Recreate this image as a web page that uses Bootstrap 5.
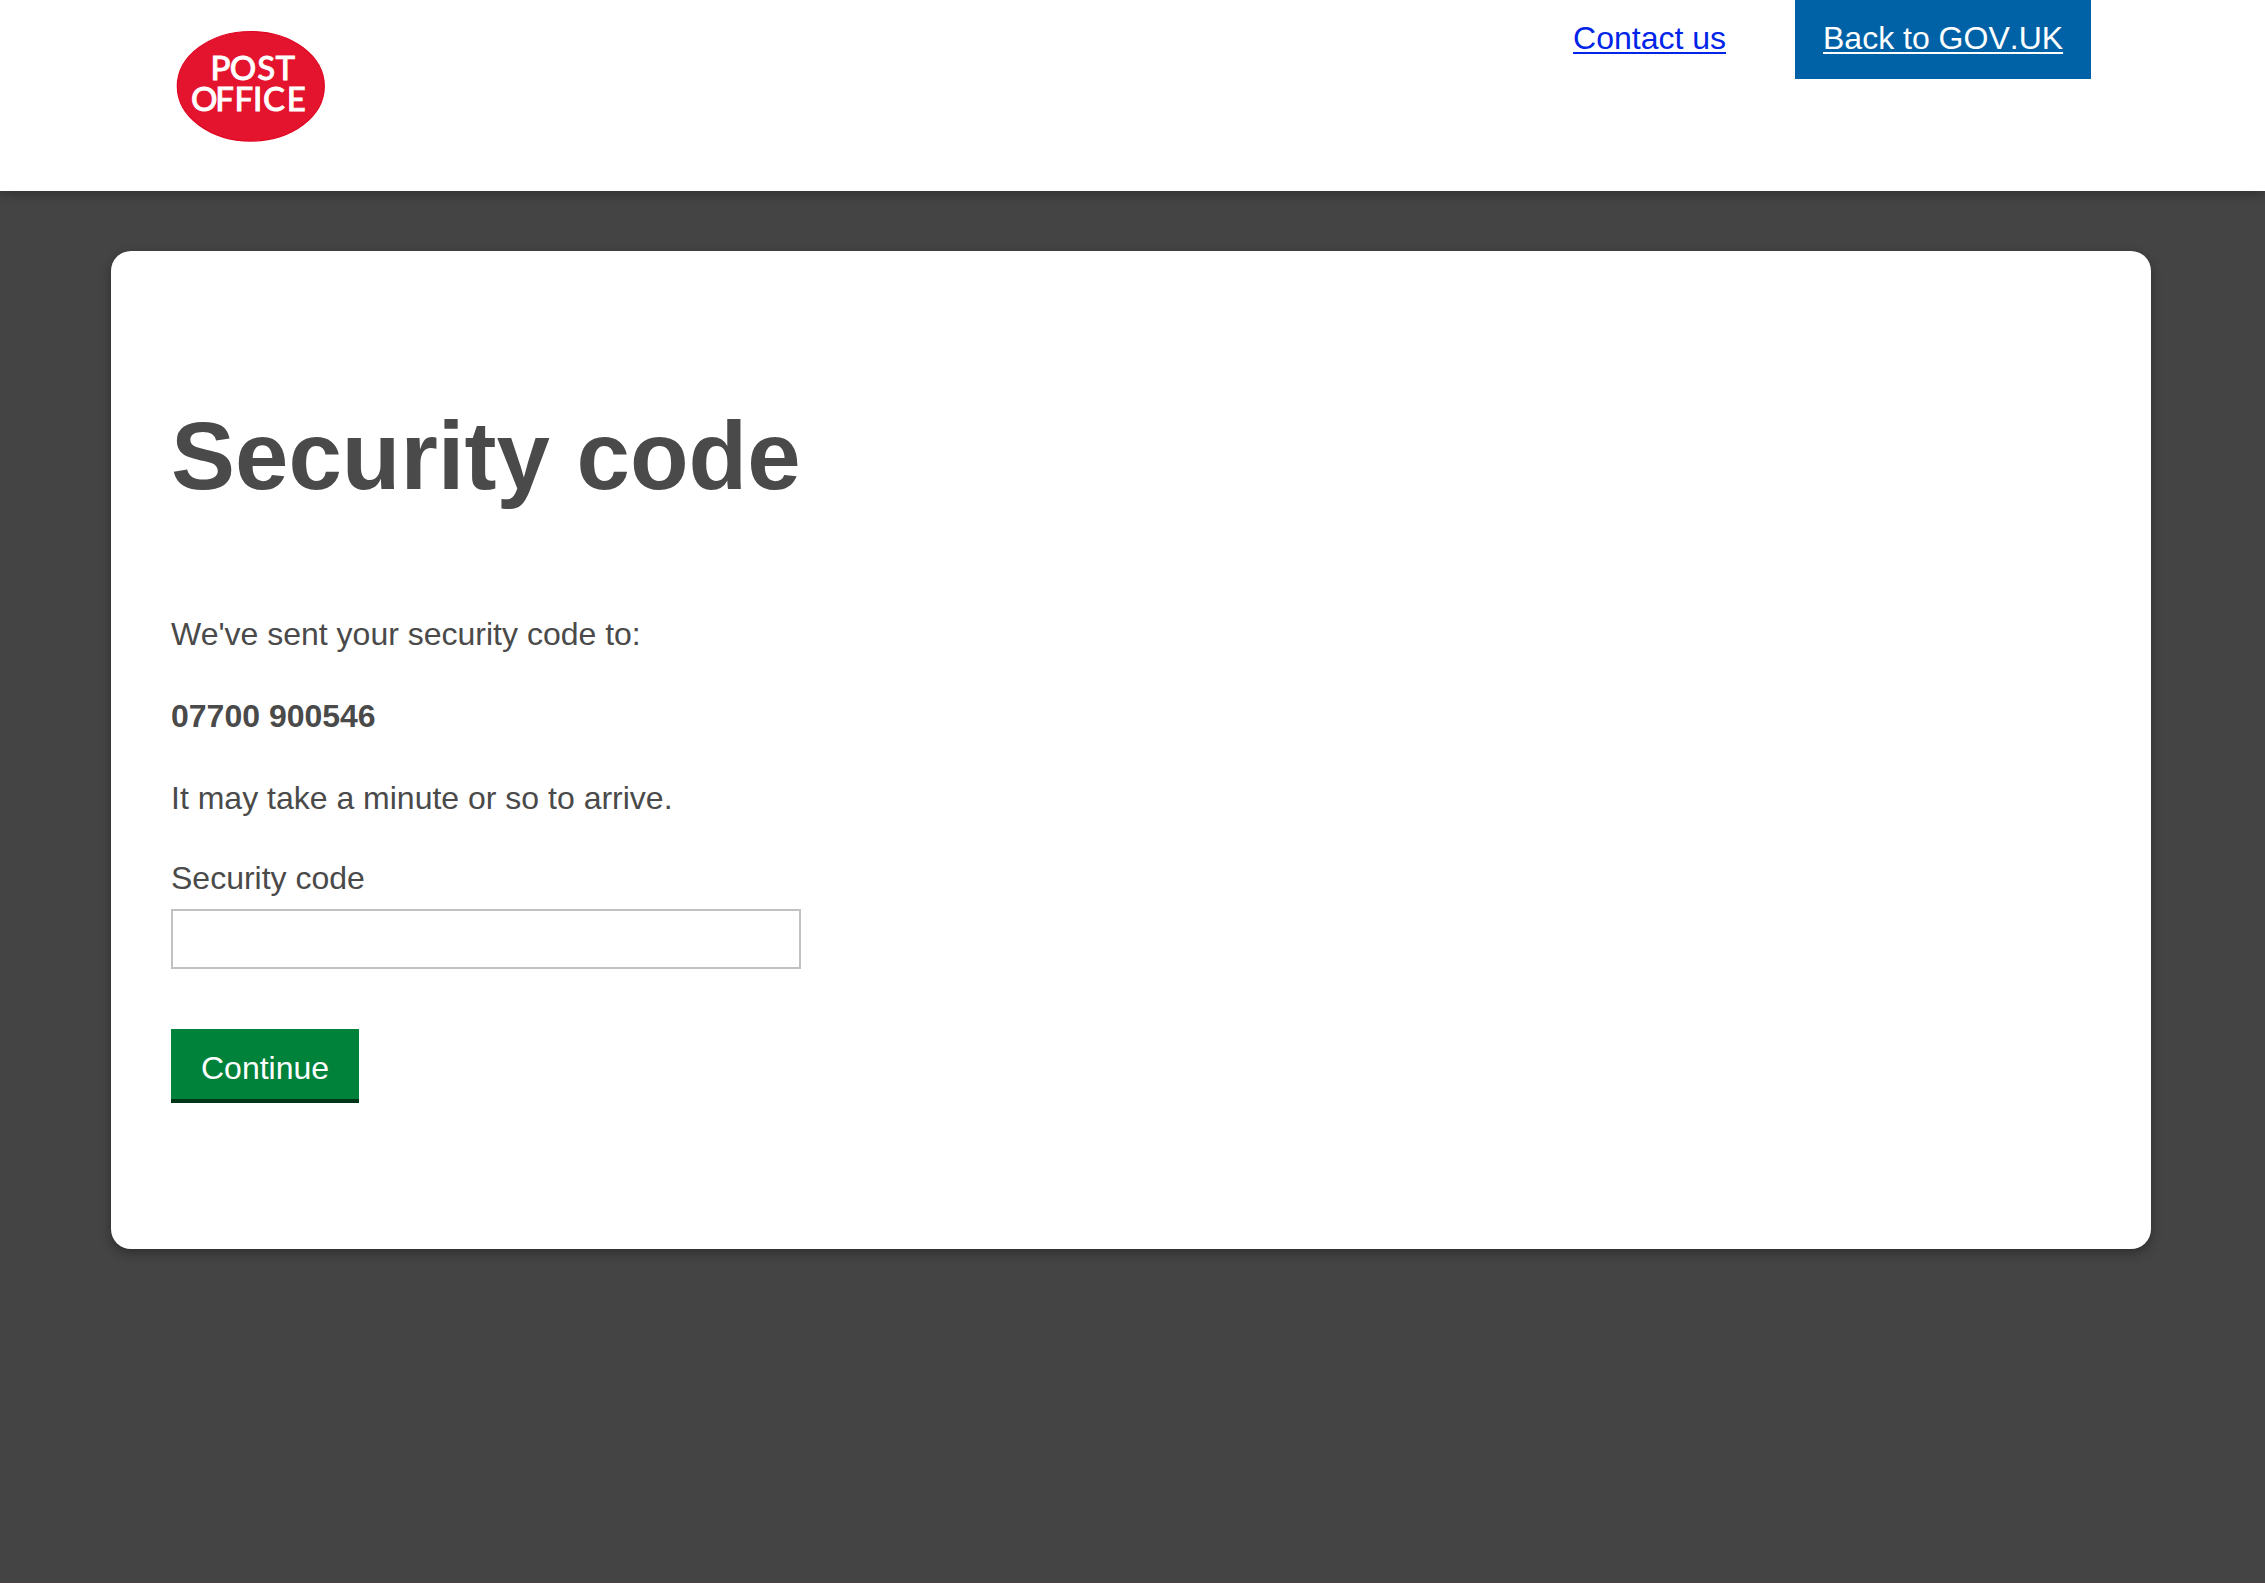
<!DOCTYPE html>
<html lang="en">
<head>
<meta charset="utf-8">
<meta name="viewport" content="width=device-width, initial-scale=1">
<title>Security code</title>
<link href="https://cdn.jsdelivr.net/npm/bootstrap@5.3.0/dist/css/bootstrap.min.css" rel="stylesheet">
<style>
body{background:#444;color:#4a4a4a;font:32px/40px "Liberation Sans",Arial,sans-serif;min-height:100vh;border-bottom:1px solid #494145}
.site-head{height:191px;padding:0 174px 0 171px;background:#fff;box-shadow:0 2px 12px rgba(0,0,0,.32)}
.site-logo{margin:25px 0 0;width:160px;height:123px}
.head-link{padding:18px 28px 21px;text-decoration-thickness:2px;text-underline-offset:3px;font-kerning:none}
.contact{color:#0024e8;margin-right:41px}
.gov{background:#0062a6;color:#fff;width:296px;white-space:nowrap}
.panel{margin:60px 114px 0 111px;height:998px;border-radius:20px;padding:155px 60px 0;box-shadow:0 4px 12px rgba(0,0,0,.32)}
h1{font-size:96px;line-height:100px;font-weight:700;margin-bottom:108px}
.panel p{margin-bottom:42px}
.panel p.last-note{margin-bottom:40px}
.code-field{width:630px}
.code-field label{margin-bottom:11px}
.code-field input{height:60px;border:2px solid #bfc1c3}
.go{margin-top:60px;padding:19px 30px 11px;border:0;border-bottom:4px solid #003618;background:#00823b;color:#fff;font-size:32px;line-height:40px}
</style>
<script src="https://cdn.jsdelivr.net/npm/bootstrap@5.3.0/dist/js/bootstrap.bundle.min.js"></script>
</head>
<body>
<header class="site-head d-flex justify-content-between align-items-start">
  <svg class="site-logo" viewBox="0 0 160 123" role="img" aria-label="Post Office">
    <ellipse cx="79.8" cy="61.3" rx="73.5" ry="54.8" fill="#e4132e" stroke="#e00622" stroke-width="1.2"/>
    <g fill="#fff" font-family="Lato, sans-serif" font-weight="500" stroke="#fff" stroke-width=".8" font-size="33">
      <text x="39.5 58.8 86.2 104.4" y="55.2">POST</text>
      <text x="20 44.2 63.6 82 92 115.8" y="85.8">OFFICE</text>
    </g>
  </svg>
  <nav class="d-flex">
    <a class="head-link contact" href="#">Contact us</a>
    <a class="head-link gov" href="#">Back to GOV.UK</a>
  </nav>
</header>
<main class="panel bg-white">
  <h1>Security code</h1>
  <p>We've sent your security code to:</p>
  <p class="fw-bold">07700 900546</p>
  <p class="last-note">It may take a minute or so to arrive.</p>
  <form>
    <div class="code-field">
      <label class="d-block" for="code">Security code</label>
      <input class="form-control rounded-0" id="code" type="text">
    </div>
    <button class="btn go rounded-0 d-block" type="button">Continue</button>
  </form>
</main>
</body>
</html>
